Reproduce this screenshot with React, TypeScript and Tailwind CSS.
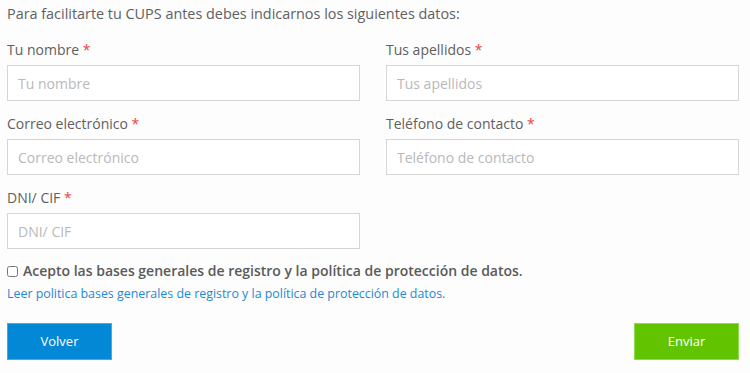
import React from "react";

type FieldProps = {
  label: string;
};

function Field({ label }: FieldProps) {
  return (
    <div className="flex flex-col">
      <label className="text-[14px] leading-[20px] text-[#5f5f5f] mb-[5px]">
        {label} <span className="text-[#e8423f]">*</span>
      </label>
      <input
        type="text"
        placeholder={label}
        className="h-[36px] w-full border border-[#d6d6d6] bg-white px-[10px] text-[14px] text-[#555] placeholder:text-[#b9b9b9] outline-none"
      />
    </div>
  );
}

export default function App() {
  return (
    <div
      className="min-h-[373px] w-[750px] bg-[#fdfdfd] pl-[7px] pr-[11px] pt-[4px]"
      style={{ fontFamily: '"Open Sans", "Liberation Sans", sans-serif' }}
    >
      <p className="text-[14.4px] leading-[20px] text-[#606060]">
        Para facilitarte tu CUPS antes debes indicarnos los siguientes datos:
      </p>

      <div className="mt-[16px] grid grid-cols-2 gap-x-[26px] gap-y-[13px]">
        <Field label="Tu nombre" />
        <Field label="Tus apellidos" />
        <Field label="Correo electrónico" />
        <Field label="Teléfono de contacto" />
        <Field label="DNI/ CIF" />
      </div>

      <label className="mt-[12px] flex items-center gap-[5px] text-[14px] font-semibold leading-[20px] text-[#5a5a5a]">
        <input type="checkbox" className="h-[11px] w-[11px] accent-[#0288d1]" />
        Acepto las bases generales de registro y la política de protección de datos.
      </label>
      <a href="#" className="mt-[4px] block text-[12.4px] leading-[18px] text-[#1e88d6]">
        Leer politica bases generales de registro y la política de protección de datos.
      </a>

      <div className="mt-[20px] flex justify-between">
        <button className="h-[37px] w-[105px] border border-[#4aa8e0] bg-[#0288d4] text-[13px] text-white">
          Volver
        </button>
        <button className="h-[37px] w-[105px] border border-[#8edc4a] bg-[#62c400] text-[13px] text-white">
          Enviar
        </button>
      </div>
    </div>
  );
}
